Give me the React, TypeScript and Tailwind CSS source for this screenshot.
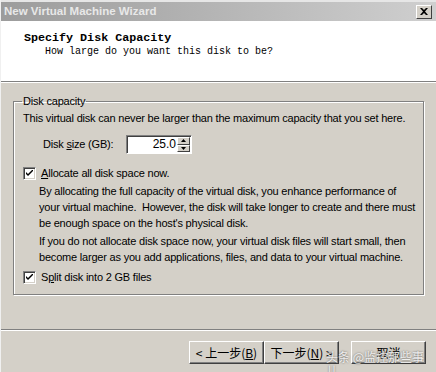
import React from "react";

function Check({ label, u, rest }: { label: string; u: string; rest: string }) {
	return (
		<div className="flex items-center gap-[5px] h-[17px]">
			<div className="size-[13px] bg-white border border-t-[#808080] border-l-[#808080] border-b-white border-r-white shadow-[inset_1px_1px_0_#404040,inset_-1px_-1px_0_#d4d0c8] flex items-center justify-center">
				<svg width="7" height="7" viewBox="0 0 7 7">
					<path d="M0 2 L0 4 L2 6 L7 1 L7 -1 L2 4 Z" fill="#000" />
				</svg>
			</div>
			<span>
				{label}
				<span className="underline">{u}</span>
				{rest}
			</span>
		</div>
	);
}

function Button({ children }: { children: React.ReactNode }) {
	return (
		<div className="h-[23px] w-[75px] flex items-center justify-center bg-[#d4d0c8] border border-t-white border-l-white border-r-[#404040] border-b-[#404040] shadow-[inset_-1px_-1px_0_#808080] text-[12px] leading-[14px] font-['Noto_Sans_CJK_SC',sans-serif] text-black">
			{children}
		</div>
	);
}

export default function App() {
	return (
		<div className="w-[436px] h-[372px] bg-[#d4d0c8] flex flex-col font-['Liberation_Sans',sans-serif] text-[11px] tracking-[-0.2px] text-black relative overflow-hidden border-l border-[#f0f0f0]">
			<div className="h-[21px] bg-gradient-to-r from-[#9c9c9c] to-[#cfcfcf] flex items-center justify-between pl-[3px] pr-[4px] border-t-2 border-[#e6e6e6]">
				<span className="font-bold text-[11.5px] text-[#e8e8e8] tracking-normal">
					New Virtual Machine Wizard
				</span>
				<div className="w-[16px] h-[14px] bg-[#d4d0c8] border border-t-white border-l-white border-r-[#404040] border-b-[#404040] flex items-center justify-center">
					<svg width="8" height="7" viewBox="0 0 8 7">
						<path d="M0 0 L2 0 L4 2 L6 0 L8 0 L5 3.5 L8 7 L6 7 L4 5 L2 7 L0 7 L3 3.5 Z" fill="#000" />
					</svg>
				</div>
			</div>
			<div className="h-[60px] bg-white pl-[23px] pt-[10px] font-['Liberation_Mono',monospace] tracking-normal">
				<div className="font-bold text-[11.7px] leading-[14px]">Specify Disk Capacity</div>
				<div className="pl-[21px] text-[10px] leading-[14px]">How large do you want this disk to be?</div>
			</div>
			<div className="h-[2px] border-t border-[#808080] border-b border-b-white" />
			<div className="px-[12px] pt-[12px]">
				<fieldset className="border border-[#808080] shadow-[1px_1px_0_white,inset_1px_1px_0_white] h-[200px] pl-[9px] pr-[4px] pb-0">
					<legend className="px-[1px] leading-[13px] -ml-[1px]">Disk capacity</legend>
					<div className="leading-[16px] pt-[2px]">
						This virtual disk can never be larger than the maximum capacity that you set here.
					</div>
					<div className="flex items-center mt-[9px] pl-[20px] h-[19px]">
						<span className="w-[83px]">
							Disk <span className="underline">s</span>ize (GB):
						</span>
						<div className="flex h-[19px] w-[66px] bg-white border border-t-[#808080] border-l-[#808080] border-b-white border-r-white shadow-[inset_1px_1px_0_#404040]">
							<span className="flex-1 text-right pr-[1px] text-[12px] leading-[17px] tracking-normal">25.0</span>
							<div className="w-[14px] flex flex-col py-[1px] pr-[1px]">
								<div className="flex-1 bg-[#d4d0c8] border border-t-white border-l-white border-r-[#404040] border-b-[#404040] flex items-center justify-center">
									<svg width="5" height="3" viewBox="0 0 5 3"><path d="M2.5 0 L5 3 L0 3 Z" fill="#000" /></svg>
								</div>
								<div className="flex-1 bg-[#d4d0c8] border border-t-white border-l-white border-r-[#404040] border-b-[#404040] flex items-center justify-center">
									<svg width="5" height="3" viewBox="0 0 5 3"><path d="M0 0 L5 0 L2.5 3 Z" fill="#000" /></svg>
								</div>
							</div>
						</div>
					</div>
					<div className="mt-[11px]">
						<Check label="" u="A" rest="llocate all disk space now." />
					</div>
					<div className="pl-[16px] mt-[1px] leading-[16px]">
						<p>
							By allocating the full capacity of the virtual disk, you enhance performance of your virtual machine.&nbsp; However, the disk will take longer to create and there must be enough space on the host's physical disk.
						</p>
						<p className="mt-[2px]">
							If you do not allocate disk space now, your virtual disk files will start small, then become larger as you add applications, files, and data to your virtual machine.
						</p>
					</div>
					<div className="mt-[4px]">
						<Check label="S" u="p" rest="lit disk into 2 GB files" />
					</div>
				</fieldset>
			</div>
			<div className="flex-1" />
			<div className="h-[2px] border-t border-[#808080] border-b border-b-white mb-[10px]" />
			<div className="flex justify-end pr-[10px] pb-[8px] tracking-normal">
				<Button>&lt; 上一步(<span className="underline">B</span>)</Button>
				<Button>下一步(<span className="underline">N</span>) &gt;</Button>
				<div className="w-[12px]" />
				<Button>取消</Button>
			</div>
			<div className="absolute left-[325px] top-[350px] text-[12px] leading-[14px] tracking-normal text-white/85 font-['Noto_Sans_CJK_SC',sans-serif] [text-shadow:0_0_2px_rgba(0,0,0,0.6)]">
				头条 @监控那些事儿
			</div>
		</div>
	);
}
